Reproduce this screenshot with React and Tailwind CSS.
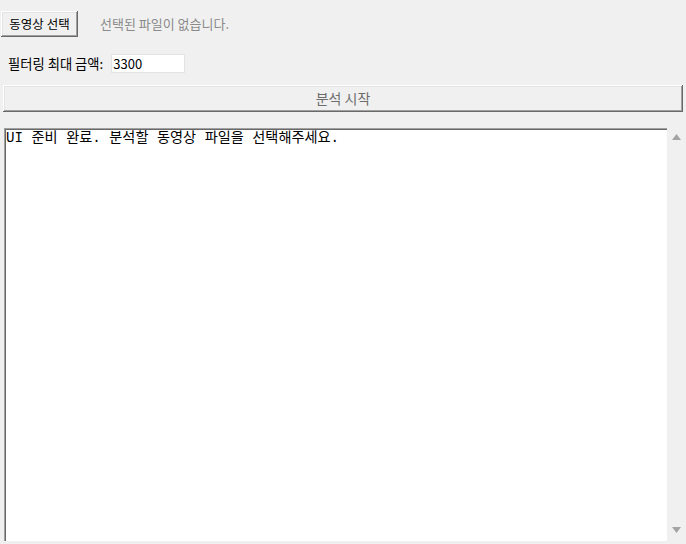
export default function App() {
  const raised =
    'shadow-[inset_-1px_-1px_#696969,inset_1px_1px_#ffffff,inset_-2px_-2px_#a0a0a0,inset_2px_2px_#e3e3e3]';

  return (
    <div className="flex h-[544px] w-[686px] flex-col bg-[#f0f0f0] font-['Noto_Sans_CJK_KR',sans-serif] text-[13px] text-black">
      {/* 파일 선택 */}
      <div className="flex items-center pl-[1px] pt-[11px]">
        <button
          type="button"
          className={`flex h-[26px] w-[77px] items-center justify-center bg-[#f0f0f0] text-[12.5px] leading-none ${raised}`}
        >
          동영상 선택
        </button>
        <span className="ml-[22px] text-[#8a8a8a]">선택된 파일이 없습니다.</span>
      </div>

      {/* 금액 필터 */}
      <div className="mt-[17px] flex items-center pl-[8px]">
        <span className="text-[13.3px]">필터링 최대 금액:</span>
        <input
          className="ml-[8px] h-[19px] w-[74px] border border-[#e3e3e3] bg-white px-[1px] text-[13px] leading-none outline-none font-['Noto_Sans_CJK_KR',sans-serif]"
          defaultValue="3300"
        />
      </div>

      {/* 분석 시작 */}
      <button
        type="button"
        className={`mx-[3px] mt-[11px] flex h-[27px] items-center justify-center bg-[#f0f0f0] text-[14px] text-[#6d6d6d] ${raised}`}
      >
        분석 시작
      </button>

      {/* 로그 */}
      <div className="mb-[3px] ml-[4px] mt-[16px] flex flex-1">
        <div className="flex-1 bg-white pl-[2px] pt-[2px] shadow-[inset_1px_1px_#a0a0a0,inset_2px_2px_#696969] font-['Liberation_Mono','Noto_Sans_CJK_KR',monospace] text-[14.2px] leading-[16px]">
          UI 준비 완료. 분석할 동영상 파일을 선택해주세요.
        </div>
        <div className="flex w-[19px] flex-col items-center justify-between bg-[#f0f0f0] pb-[8px] pt-[6px]">
          <svg width="9" height="6" viewBox="0 0 9 6">
            <path d="M4.5 0 L9 6 L0 6 Z" fill="#a3a3a3" />
          </svg>
          <svg width="9" height="6" viewBox="0 0 9 6">
            <path d="M0 0 L9 0 L4.5 6 Z" fill="#a3a3a3" />
          </svg>
        </div>
      </div>
    </div>
  );
}
